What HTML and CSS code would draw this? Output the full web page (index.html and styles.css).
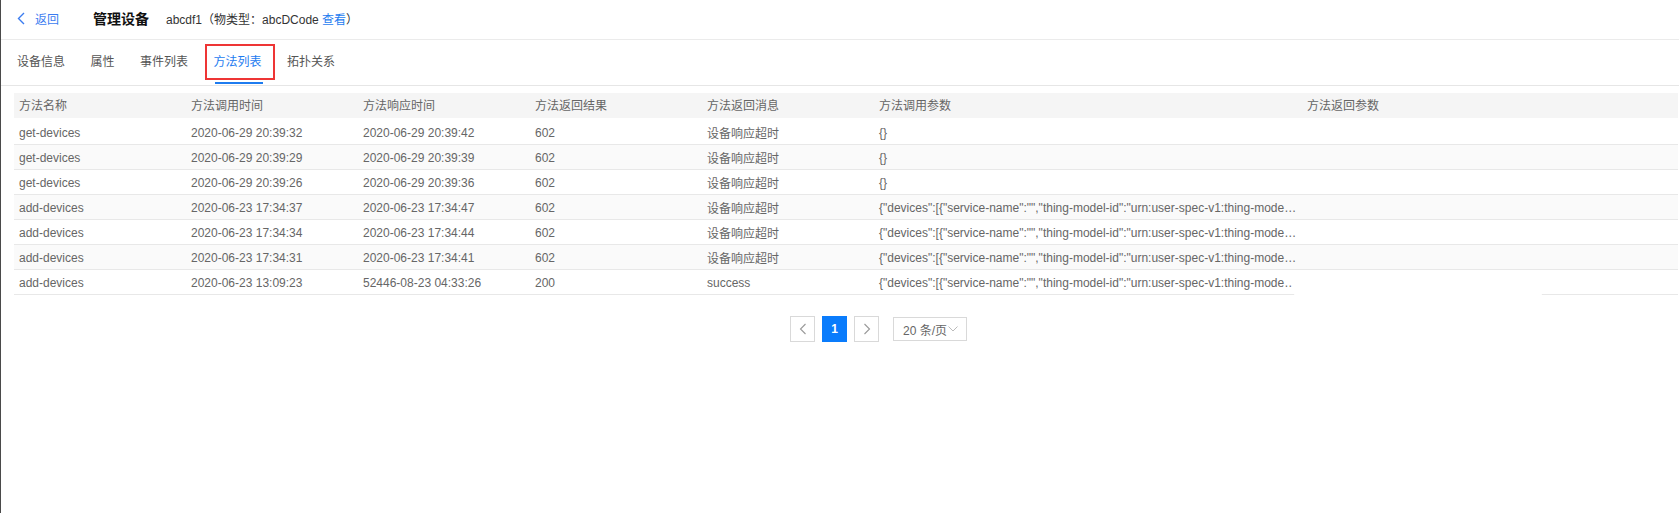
FILE: index.html
```html
<!DOCTYPE html>
<html lang="zh-CN">
<head>
<meta charset="utf-8">
<title>管理设备</title>
<link rel="stylesheet" href="styles.css">
</head>
<body>
<div class="app">
  <div class="topbar">
    <a class="back">
      <svg class="back-icon" width="8" height="13" viewBox="0 0 8 13"><path d="M7 1 L1.5 6.5 L7 12" fill="none" stroke="#3b7cf0" stroke-width="1.4"/></svg>
      <span>返回</span>
    </a>
    <span class="title">管理设备</span>
    <span class="meta">abcdf1（物类型：abcDCode <a class="link">查看</a>）</span>
  </div>

  <div class="tabs">
    <div class="tab">设备信息</div>
    <div class="tab">属性</div>
    <div class="tab">事件列表</div>
    <div class="tab active">方法列表<span class="mark"></span></div>
    <div class="tab">拓扑关系</div>
  </div>

  <div class="table-wrap">
    <table class="grid">
      <colgroup>
        <col class="c-narrow"><col class="c-narrow"><col class="c-narrow"><col class="c-narrow"><col class="c-narrow"><col class="c-wide"><col>
      </colgroup>
      <thead>
        <tr><th>方法名称</th><th>方法调用时间</th><th>方法响应时间</th><th>方法返回结果</th><th>方法返回消息</th><th>方法调用参数</th><th>方法返回参数</th></tr>
      </thead>
      <tbody>
        <tr><td>get-devices</td><td>2020-06-29 20:39:32</td><td>2020-06-29 20:39:42</td><td>602</td><td>设备响应超时</td><td>{}</td><td></td></tr>
        <tr><td>get-devices</td><td>2020-06-29 20:39:29</td><td>2020-06-29 20:39:39</td><td>602</td><td>设备响应超时</td><td>{}</td><td></td></tr>
        <tr><td>get-devices</td><td>2020-06-29 20:39:26</td><td>2020-06-29 20:39:36</td><td>602</td><td>设备响应超时</td><td>{}</td><td></td></tr>
        <tr><td>add-devices</td><td>2020-06-23 17:34:37</td><td>2020-06-23 17:34:47</td><td>602</td><td>设备响应超时</td><td>{"devices":[{"service-name":"","thing-model-id":"urn:user-spec-v1:thing-model:abcDCode:1.0"}]}</td><td></td></tr>
        <tr><td>add-devices</td><td>2020-06-23 17:34:34</td><td>2020-06-23 17:34:44</td><td>602</td><td>设备响应超时</td><td>{"devices":[{"service-name":"","thing-model-id":"urn:user-spec-v1:thing-model:abcDCode:1.0"}]}</td><td></td></tr>
        <tr><td>add-devices</td><td>2020-06-23 17:34:31</td><td>2020-06-23 17:34:41</td><td>602</td><td>设备响应超时</td><td>{"devices":[{"service-name":"","thing-model-id":"urn:user-spec-v1:thing-model:abcDCode:1.0"}]}</td><td></td></tr>
        <tr><td>add-devices</td><td>2020-06-23 13:09:23</td><td>52446-08-23 04:33:26</td><td>200</td><td>success</td><td>{"devices":[{"service-name":"","thing-model-id":"urn:user-spec-v1:thing-model:abcDCode:1.0"}]}</td><td></td></tr>
      </tbody>
    </table>
    <div class="blot"></div>
  </div>

  <div class="pager">
    <span class="pg">
      <svg width="8" height="12" viewBox="0 0 8 12"><path d="M6.5 1 L1.5 6 L6.5 11" fill="none" stroke="#999" stroke-width="1.1"/></svg>
    </span>
    <span class="pg current">1</span>
    <span class="pg">
      <svg width="8" height="12" viewBox="0 0 8 12"><path d="M1.5 1 L6.5 6 L1.5 11" fill="none" stroke="#999" stroke-width="1.1"/></svg>
    </span>
    <span class="size">20 条/页<svg class="caret" width="10" height="6" viewBox="0 0 10 6"><path d="M0.5 0.5 L5 5 L9.5 0.5" fill="none" stroke="#bbb" stroke-width="1"/></svg></span>
  </div>

  <div class="annot"></div>
</div>
</body>
</html>
```

FILE: styles.css
```css
* { box-sizing: border-box; }

html, body {
  margin: 0;
  padding: 0;
  background: #fff;
}

body {
  font-family: "Liberation Sans", Arial, "Noto Sans CJK SC", sans-serif;
  font-size: 12px;
  color: #666;
}

.app {
  position: relative;
  min-height: 513px;
  border-left: 1px solid #4a4a4a;
}

.topbar {
  height: 40px;
  border-bottom: 1px solid #ebebeb;
  display: flex;
  align-items: center;
  padding-left: 16px;
  padding-bottom: 3px;
}

.back {
  display: flex;
  align-items: center;
  color: #3b7cf0;
  font-size: 12px;
  cursor: pointer;
}

.back-icon {
  margin-right: 10px;
}

.title {
  margin-left: 34px;
  font-size: 14px;
  font-weight: bold;
  color: #111;
}

.meta {
  margin-left: 17px;
  font-size: 12px;
  color: #333;
}

.link {
  color: #1e7cf0;
  cursor: pointer;
}

.tabs {
  height: 46px;
  border-bottom: 1px solid #e6e6e6;
  display: flex;
  padding-left: 16px;
}

.tab {
  position: relative;
  line-height: 45px;
  margin-right: 25.5px;
  font-size: 12px;
  color: #555;
}

.tab.active {
  color: #1e7cf0;
}

.mark {
  position: absolute;
  left: 1px;
  right: -1px;
  bottom: 1px;
  height: 2px;
  background: #1e7cf0;
}

.table-wrap {
  position: relative;
  margin: 7px 0 0 13px;
  width: 1664px;
}

.grid {
  width: 100%;
  table-layout: fixed;
  border-collapse: separate;
  border-spacing: 0;
}

.c-narrow { width: 172px; }
.c-wide { width: 428px; }

.grid th {
  height: 27px;
  padding: 0 5px 2px;
  background: #f5f5f5;
  border-bottom: 2px solid #fff;
  background-clip: padding-box;
  text-align: left;
  font-weight: normal;
  color: #666;
  white-space: nowrap;
}

.grid td {
  height: 25px;
  padding: 1px 5px 0;
  border-bottom: 1px solid #e8e8e8;
  color: #666;
  white-space: nowrap;
  overflow: hidden;
  text-overflow: ellipsis;
}

.grid tbody tr:nth-child(even) td {
  background: #fafafa;
}

.blot {
  position: absolute;
  left: 1278px;
  top: 177px;
  width: 252px;
  height: 31px;
  border-radius: 14px;
  background: #fff;
}

.pager {
  display: flex;
  align-items: center;
  justify-content: center;
  padding-left: 77px;
  margin-top: 21px;
}

.pg {
  width: 25px;
  height: 26px;
  margin-right: 7px;
  border: 1px solid #d9d9d9;
  display: flex;
  align-items: center;
  justify-content: center;
  color: #666;
}

.pg.current {
  background: #0a7cfc;
  border-color: #0a7cfc;
  color: #fff;
  font-weight: bold;
  font-size: 12px;
}

.size {
  margin-left: 7px;
  width: 74px;
  height: 24px;
  border: 1px solid #d9d9d9;
  display: flex;
  align-items: center;
  padding-left: 9px;
  color: #666;
  font-size: 12px;
}

.caret {
  margin-left: 1px;
}

.annot {
  position: absolute;
  left: 204px;
  top: 44px;
  width: 70px;
  height: 36px;
  border: 2px solid #ee3535;
}
```
